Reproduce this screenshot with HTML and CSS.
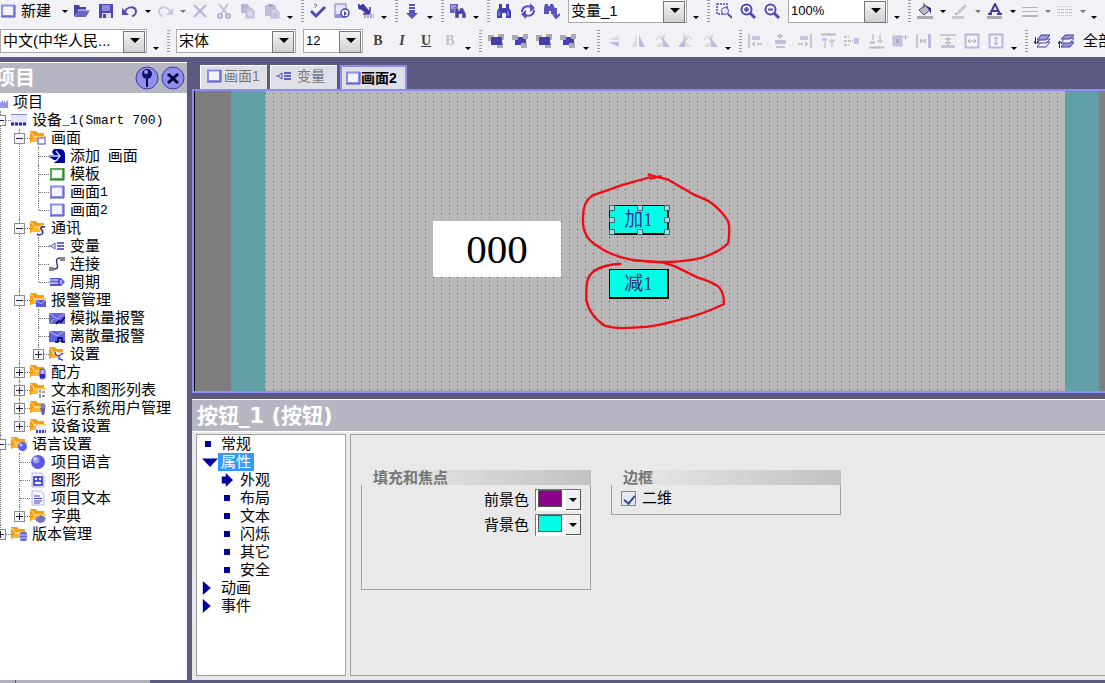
FILE: index.html
```html
<!DOCTYPE html>
<html lang="zh-CN">
<head>
    <meta charset="UTF-8">
    <meta name="viewport" content="width=device-width, initial-scale=1.0">
    <title>画面2 - 设备_1</title>
    <link rel="stylesheet" href="styles.css">
</head>
<body>
    <!-- Icon set -->
    <svg class="sprite" aria-hidden="true">
        <symbol id="screen" viewBox="0 0 16 16"><path d="M2 2.500h12v10.500h-12z" fill="#f4f4ff" stroke="#8c8cec" stroke-width="2"/><path d="M1 14h14V2" fill="none" stroke="#5050b0"/></symbol>
        <symbol id="template" viewBox="0 0 16 16"><path d="M2 3h12v10H2z" fill="#f4fff4" stroke="#58a858" stroke-width="2"/><path d="M1 14h14V2" fill="none" stroke="#206020"/></symbol>
        <symbol id="open" viewBox="0 0 16 16"><path d="M0 14V2h5l1 2h6v3H5z" fill="#4742a8"/><path d="M4 7h12l-4 7H1z" fill="#6a64c4"/><path d="M4 7h12" stroke="#e4e4f4"/></symbol>
        <symbol id="save" viewBox="0 0 16 16"><path d="M1 1h14v14H1z" fill="#4d48b4"/><path d="M4 2h8v6H4z" fill="#8d88d8"/><path d="M4 10h9v5H4z" fill="#dcdcf4"/><path d="M5 11h3v4H5z" fill="#4d48b4"/></symbol>
        <symbol id="undo" viewBox="0 0 16 16"><path d="M3 9c2-6 10-6 11-1 0 3-2 5-4 5" fill="none" stroke="#514bad" stroke-width="2"/><path d="M0 5v7h7z" fill="#514bad"/></symbol>
        <symbol id="redo" viewBox="0 0 16 16"><path d="M13 9C11 3 3 3 2 8c0 3 2 5 4 5" fill="none" stroke="#cac8dc" stroke-width="2"/><path d="M16 5v7H9z" fill="#cac8dc"/></symbol>
        <symbol id="delete" viewBox="0 0 16 16"><path d="M2 2l12 12M14 2L2 14" stroke="#b4b2d6" stroke-width="2"/></symbol>
        <symbol id="cut" viewBox="0 0 16 16"><path d="M3 1l8 10M12 1L5 11" stroke="#c2c0d8" stroke-width="2"/><g fill="none" stroke="#b4b2d2" stroke-width="2"><circle cx="4" cy="13" r="2"/><circle cx="12" cy="13" r="2"/></g></symbol>
        <symbol id="copy" viewBox="0 0 16 16"><path d="M1 1h6l2 2v7H1z" fill="#b9b7d4"/><path d="M6 5h5l3 3v7H6z" fill="#c9c7e2" stroke="#b9b7d2"/><path d="M8 10h4M8 12h4" stroke="#eee"/></symbol>
        <symbol id="paste" viewBox="0 0 16 16"><path d="M1 2h11v11H1z" fill="#c0bed8"/><path d="M4 1h5v3H4z" fill="#a9a7c4"/><path d="M7 6h5l3 3v6H7z" fill="#d4d2ea" stroke="#b4b2d0"/><path d="M9 11h4M9 13h4" stroke="#a9a7d4"/></symbol>
        <symbol id="check" viewBox="0 0 16 16"><path d="M1 8l5 5 9-9" fill="none" stroke="#5049ae" stroke-width="3"/><path d="M4 2q2-2 3 0 0 1-2 2v1" fill="none" stroke="#777"/></symbol>
        <symbol id="simulate" viewBox="0 0 16 16"><path d="M1 1h11v13H1z" fill="#e4e4fc" stroke="#7d78c8"/><path d="M1 11h9v4H1z" fill="#938fe0"/><circle cx="11" cy="10" r="4" fill="#fff" stroke="#4742a8" stroke-width="1.500"/><path d="M10 8v5l3-2.500z" fill="#4742a8"/></symbol>
        <symbol id="transfer" viewBox="0 0 16 16"><path d="M0 1l3 2 2-2 6 7h1V4v7H5l3-1-5-4H1z" fill="#403a9c" stroke="#403a9c"/><path d="M6 12h10M6 14h10" stroke="#5a55ba" stroke-dasharray="2 1"/></symbol>
        <symbol id="download" viewBox="0 0 16 16"><path d="M5 1h6v2H5zM5 4h6v2H5zM5 7h6v3h3l-6 6-6-6h3z" fill="#5a54b8"/></symbol>
        <symbol id="crossref" viewBox="0 0 16 16"><path d="M0 1h8v9H0z" fill="#6761bd"/><path d="M1 3h5M1 5h3" stroke="#ddd"/><path d="M5 5h3l1 3 1-3h3l3 6v4h-4v-4h-3v4H5z" fill="#4b46a8" stroke="#ddd" stroke-width=".5"/></symbol>
        <symbol id="find" viewBox="0 0 16 16"><path d="M3 1h3v4h4V1h3v4l2 3v7h-5v-5H6v5H1V8l2-3z" fill="#443eae"/><path d="M3 8v5M12 8v5" stroke="#a9a5ee"/></symbol>
        <symbol id="replace" viewBox="0 0 16 16"><path d="M2 9c0-5 5-7 9-5M14 7c0 5-5 7-9 5" fill="none" stroke="#5751b5" stroke-width="2"/><path d="M10 0l5 5-5 4zM6 7l-5 4 5 5z" fill="#5751b5"/></symbol>
        <symbol id="findnext" viewBox="0 0 16 16"><path d="M1 1h3v2h2V1h3l2 5v5H7V8H5v3H0V5z" fill="#5a54b8"/><path d="M12 5v9M9 11l3 4 4-4" fill="none" stroke="#5a54b8" stroke-width="2"/></symbol>
        <symbol id="zoomarea" viewBox="0 0 16 16"><path d="M1 1h10v10H1z" fill="none" stroke="#514bad" stroke-width="1.500" stroke-dasharray="2 1"/><circle cx="9" cy="8" r="3.500" fill="#ececff" stroke="#514bad"/><path d="M12 11l4 4" stroke="#514bad" stroke-width="2"/></symbol>
        <symbol id="zoomin" viewBox="0 0 16 16"><circle cx="6.500" cy="6.500" r="5" fill="#f4f4ff" stroke="#514bad" stroke-width="2"/><path d="M4 6.500h5M6.500 4v5" stroke="#514bad" stroke-width="2"/><path d="M10 10l5 5" stroke="#514bad" stroke-width="3"/></symbol>
        <symbol id="zoomout" viewBox="0 0 16 16"><circle cx="6.500" cy="6.500" r="5" fill="#f4f4ff" stroke="#514bad" stroke-width="2"/><path d="M4 6.500h5" stroke="#514bad" stroke-width="2"/><path d="M10 10l5 5" stroke="#514bad" stroke-width="3"/></symbol>
        <symbol id="fill" viewBox="0 0 16 16"><path d="M7 0v5M2 7l6-5 5 5-6 5z" fill="#b9b9c8" stroke="#484860"/><path d="M8 2l6 3v6l-2-4z" fill="#302a78"/><path d="M0 13h16v3H0z" fill="#aaa"/></symbol>
        <symbol id="pen" viewBox="0 0 16 16"><path d="M5 11l1-3 7-7 2 2-7 7z" fill="#c4c4cc"/><path d="M0 13h12v3H0z" fill="#c9c9c9"/><path d="M3 10h2v2H3z" fill="#aaa"/></symbol>
        <symbol id="fontcolor" viewBox="0 0 16 16"><path d="M3 11L8 1l5 10M5 8h6M1 11h4M10 11h5" fill="none" stroke="#443e98" stroke-width="2"/><path d="M0 13h15v3H0z" fill="#aaa"/></symbol>
        <symbol id="lines" viewBox="0 0 16 16"><path d="M0 4.500h16M0 8.500h16" stroke="#b4b4b9"/><path d="M0 13h16" stroke="#b4b4b9" stroke-width="2"/></symbol>
        <symbol id="dashes" viewBox="0 0 16 16"><path d="M0 3.500h16M0 12.500h16" stroke="#bbb" stroke-dasharray="1 1"/><path d="M0 6.500h16M0 9.500h16" stroke="#bbb" stroke-dasharray="3 1"/></symbol>
        <symbol id="front" viewBox="0 0 16 16"><path d="M0 2h6v6H0zM10 1h6v6h-6zM9 9h6v6H9z" fill="#aaa"/><path d="M3 4h11v8H3z" fill="#443eb0"/></symbol>
        <symbol id="back" viewBox="0 0 16 16"><path d="M3 4h11v8H3z" fill="#443eb0"/><path d="M0 2h6v5H0zM9 10h6v5H9zM11 1h5v5h-5z" fill="#aaa"/></symbol>
        <symbol id="flipv" viewBox="0 0 16 16"><path d="M3 7l10-5v5z" fill="#ddd"/><path d="M3 9h10v5z" fill="#bdbbe0"/></symbol>
        <symbol id="fliph" viewBox="0 0 16 16"><path d="M7 2v12H2z" fill="#ddd"/><path d="M9 2v12h6z" fill="#bdbbe0"/></symbol>
        <symbol id="rotate" viewBox="0 0 16 16"><path d="M8 4l8 10H9z" fill="#bdbbe0"/><path d="M1 14h7V9z" fill="#ddd"/><path d="M2 7q3-6 8-2M10 1v5H6" fill="none" stroke="#c4c4cc"/></symbol>
        <symbol id="alignl" viewBox="0 0 16 16"><path d="M1 1v14" stroke="#bbb" stroke-width="1.500"/><path d="M4 3h8v4H4z" fill="#c6c4e2"/><path d="M4 11h3M9 11h5M6 9v4" stroke="#c4c4ce" stroke-width="2"/></symbol>
        <symbol id="alignc" viewBox="0 0 16 16"><path d="M3 7h11v4H3z" fill="#c2c0e0"/><path d="M8 1v5M5 3h6M4 14h9" stroke="#c4c4c8" stroke-width="2"/></symbol>
        <symbol id="alignt" viewBox="0 0 16 16"><path d="M1 1.500h15" stroke="#bbb" stroke-width="2"/><path d="M2 5h5v3H2z" fill="#c6c4e2"/><path d="M5 9v6M12 6v8M9 8h6" stroke="#c4c4ce" stroke-width="1.500"/></symbol>
        <symbol id="alignm" viewBox="0 0 16 16"><path d="M0 4h5M0 8h9M0 12h5" stroke="#c4c4c8" stroke-dasharray="3 1" stroke-width="2"/><path d="M10 5h5v6h-5z" fill="#c2c0e0"/></symbol>
        <symbol id="same" viewBox="0 0 16 16"><path d="M1 3h9v10H1z" fill="#c6c4e2" stroke="#bbb9dc"/><path d="M4 6h3v4H4z" fill="#aaa8c8"/><path d="M11 4h5M13.500 2v5" stroke="#bbb"/></symbol>
        <symbol id="spaceh" viewBox="0 0 16 16"><path d="M1 1v14M4 8h6M5 6v4M9 6v4" stroke="#bbb" stroke-width="1.500"/><path d="M12 1h3v14h-3z" fill="#bcbae0"/></symbol>
        <symbol id="spacev" viewBox="0 0 16 16"><path d="M0 2h16M8 4v8M5 6h6M5 10h6" stroke="#bbb" stroke-width="1.500"/><path d="M1 12h14v3H1z" fill="#c6c4e2"/></symbol>
        <symbol id="sizew" viewBox="0 0 16 16"><path d="M1.500 1.500h13v13h-13z" fill="#f4f4ff" stroke="#bab8dc" stroke-width="2"/><path d="M4 8h8M6 6L4 8l2 2M10 6l2 2-2 2" fill="none" stroke="#aaa"/></symbol>
        <symbol id="sizeh" viewBox="0 0 16 16"><path d="M1.500 1.500h13v13h-13z" fill="#f4f4ff" stroke="#bab8dc" stroke-width="2"/><path d="M8 4v8M6 6l2-2 2 2M6 10l2 2 2-2" fill="none" stroke="#aaa"/></symbol>
        <symbol id="layer-down" viewBox="0 0 16 16"><path d="M7 9h9l-4 5H3z" fill="#f4f4ff" stroke="#453f96"/><path d="M7 6h9l-4 4H3z" fill="#f4f4ff" stroke="#453f96"/><path d="M7 2h9l-4 5H3z" fill="#9a96e4" stroke="#453f96"/><path d="M1.500 4v6M0 8l1.500 3L4 8" fill="none" stroke="#333"/></symbol>
        <symbol id="layer-up" viewBox="0 0 16 16"><path d="M7 9h9l-4 5H3z" fill="#9a96e4" stroke="#453f96"/><path d="M7 5h9l-4 5H3z" fill="#f4f4ff" stroke="#453f96"/><path d="M7 2h9l-4 4H3z" fill="#9a96e4" stroke="#453f96"/><path d="M1.500 15V9M0 11l1.500-3L4 11" fill="none" stroke="#333"/></symbol>

        <symbol id="folder" viewBox="0 0 16 16"><path d="M0 1h6l2 2h6v4H5l-4 6H0z" fill="#f2a010"/><path d="M5 6h11l-4 6H1z" fill="#fcb830"/><path d="M0 2l3 2 1 3h10" fill="none" stroke="#fff0c4" stroke-width=".8"/></symbol>
        <symbol id="f-screen" viewBox="0 0 16 16"><use href="#folder"/><path d="M8 8h7v6H8z" fill="#fff" stroke="#8080e8" stroke-width="1.500"/></symbol>
        <symbol id="f-comm" viewBox="0 0 16 16"><use href="#folder"/><path d="M15 7q-5-1-4 2 3 3 1 5-3 2-5 0" fill="none" stroke="#fff" stroke-width="3"/><path d="M15 7q-5-1-4 2 3 3 1 5-3 2-5 0" fill="none" stroke="#28287c" stroke-width="1.500"/></symbol>
        <symbol id="f-mail" viewBox="0 0 16 16"><use href="#folder"/><path d="M6 8h10v7H6z" fill="#5858dc"/><path d="M6 8l5 4 5-4" fill="none" stroke="#b9b9ff"/></symbol>
        <symbol id="f-set" viewBox="0 0 16 16"><use href="#folder"/><path d="M6 6l4 4 5-3M10 10v3l4 2" fill="none" stroke="#fff" stroke-width="3"/><path d="M6 6l1 3 3 1 4-3M10 10v3l4 1" fill="none" stroke="#4545c8" stroke-width="1.500"/></symbol>
        <symbol id="f-recipe" viewBox="0 0 16 16"><use href="#folder"/><rect x="10" y="5" width="5" height="10" rx="2" fill="#b9b9f4" stroke="#4444a8"/><path d="M10 10h5v4h-5z" fill="#2828d8"/></symbol>
        <symbol id="f-list" viewBox="0 0 16 16"><use href="#folder"/><path d="M8 8h8v8H8z" fill="#fff"/><path d="M10 8v3M9 13h2M9 15h2M12 10h3M12 14h3" stroke="#333"/></symbol>
        <symbol id="f-user" viewBox="0 0 16 16"><use href="#folder"/><circle cx="13" cy="6" r="2.500" fill="#8080d0"/><path d="M10 8h5v4l-1 3h-2z" fill="#6868b8"/></symbol>
        <symbol id="f-device" viewBox="0 0 16 16"><use href="#folder"/><path d="M6 7h10v8H6z" fill="#ececff"/><path d="M6 13.500h10" stroke="#3838c8" stroke-width="3" stroke-dasharray="2 1"/></symbol>
        <symbol id="f-ball" viewBox="0 0 16 16"><use href="#folder"/><circle cx="11.500" cy="10.500" r="4.500" fill="#6060e0"/><circle cx="10" cy="9" r="1.500" fill="#c9c9ff"/></symbol>
        <symbol id="f-book" viewBox="0 0 16 16"><use href="#folder"/><path d="M6 10l5-3 5 3-2 4-4 1-4-2z" fill="#7272c4"/></symbol>
        <symbol id="f-db" viewBox="0 0 16 16"><use href="#folder"/><rect x="9" y="6" width="7" height="9" rx="2" fill="#6464d8"/><path d="M9 9h7M9 12h7" stroke="#ccf"/></symbol>
        <symbol id="project" viewBox="0 0 16 16"><path d="M8 14V9l3-3v3l2-3v3l3-3v8z" fill="#9494ea"/></symbol>
        <symbol id="device" viewBox="0 0 16 16"><path d="M0 2h16v12H0z" fill="#e4e4ff"/><path d="M0 2.500h16" stroke="#8888d8"/><path d="M0 12h16" stroke="#2424c4" stroke-width="3" stroke-dasharray="3 1"/></symbol>
        <symbol id="add" viewBox="0 0 16 16"><path d="M5 1h7q4 1 4 6v8H5l3-3H5L0 9V7h5L3 4z" fill="#0000a0"/><path d="M0 8h11M7 3l4 5-4 5" fill="none" stroke="#b9d4ff" stroke-width="1.500"/></symbol>
        <symbol id="tag" viewBox="0 0 16 16"><path d="M0 8h2l4-3v6L2 8" fill="none" stroke="#4848d0"/><path d="M8 5h7M8 8h7M8 11h7" stroke="#3434c8" stroke-width="1.500"/></symbol>
        <symbol id="link" viewBox="0 0 16 16"><path d="M0 11h5v4H0zM11 1h5v4h-5z" fill="#888"/><path d="M5 13q5 0 3-5-2-6 3-6" fill="none" stroke="#343490" stroke-width="1.500"/></symbol>
        <symbol id="cycle" viewBox="0 0 16 16"><path d="M1 4h11l4 4-4 4H1z" fill="#5252e4"/><path d="M0 6h9M0 9h9M12 6v4" stroke="#c9c9ff" stroke-width="1.500"/></symbol>
        <symbol id="analog" viewBox="0 0 16 16"><path d="M0 3h16v11H0z" fill="#6262e4"/><path d="M0 3l8 6 8-6M0 14l5-5" fill="none" stroke="#b9b9ff"/><path d="M7 14l3-3 2 1 4-5" fill="none" stroke="#00004c" stroke-width="1.500"/></symbol>
        <symbol id="discrete" viewBox="0 0 16 16"><path d="M0 3h16v11H0z" fill="#6262e4"/><path d="M0 3l8 5 8-5" fill="none" stroke="#b9b9ff"/><path d="M6 14h3v-4h4v4h3" fill="none" stroke="#00004c" stroke-width="1.500"/></symbol>
        <symbol id="ball" viewBox="0 0 16 16"><circle cx="8" cy="8" r="7" fill="#5858e4"/><circle cx="6" cy="6" r="3.500" fill="#9a9af8"/><circle cx="5" cy="5" r="1.500" fill="#e4e4ff"/></symbol>
        <symbol id="graphic" viewBox="0 0 16 16"><path d="M2 1h9l3 3v11H2z" fill="#f0f0ff" stroke="#b4b4e0"/><path d="M4 5h8v8H4zM8 5v4h4M4 9h3" fill="none" stroke="#2828c8" stroke-width="1.500"/></symbol>
        <symbol id="text" viewBox="0 0 16 16"><path d="M2 1h9l3 3v11H2z" fill="#f4f4ff" stroke="#b4b4e0"/><path d="M4 6h6M4 8.500h8M4 11h8M4 13h6" stroke="#4040c8"/></symbol>
    </svg>

    <!-- Toolbars -->
    <div class="toolbars">
        <div class="toolbar toolbar-top">
            <button class="new"><svg class="icon"><use href="#screen"/></svg>新建</button><i class="caret"></i>
            <button class="tool" aria-label="打开"><svg class="icon"><use href="#open"/></svg></button>
            <button class="tool" aria-label="保存"><svg class="icon"><use href="#save"/></svg></button>
            <button class="tool" aria-label="撤消"><svg class="icon"><use href="#undo"/></svg></button><i class="caret"></i>
            <button class="tool" aria-label="重做"><svg class="icon"><use href="#redo"/></svg></button><i class="caret dim"></i>
            <button class="tool" aria-label="删除"><svg class="icon"><use href="#delete"/></svg></button>
            <button class="tool" aria-label="剪切"><svg class="icon"><use href="#cut"/></svg></button>
            <button class="tool" aria-label="复制"><svg class="icon"><use href="#copy"/></svg></button>
            <button class="tool" aria-label="粘贴"><svg class="icon"><use href="#paste"/></svg></button>
            <i class="caret more"></i><i class="grip"></i>
            <button class="tool" aria-label="检查"><svg class="icon"><use href="#check"/></svg></button>
            <button class="tool" aria-label="模拟"><svg class="icon"><use href="#simulate"/></svg></button>
            <button class="tool" aria-label="传送"><svg class="icon"><use href="#transfer"/></svg></button>
            <i class="caret more"></i><i class="grip"></i>
            <button class="tool" aria-label="下载"><svg class="icon"><use href="#download"/></svg></button>
            <i class="caret more"></i><i class="grip"></i>
            <button class="tool" aria-label="交叉引用"><svg class="icon"><use href="#crossref"/></svg></button>
            <i class="caret more"></i><i class="grip"></i>
            <button class="tool" aria-label="查找"><svg class="icon"><use href="#find"/></svg></button>
            <button class="tool" aria-label="替换"><svg class="icon"><use href="#replace"/></svg></button>
            <button class="tool" aria-label="查找下一个"><svg class="icon"><use href="#findnext"/></svg></button>
            <label class="combo combo-tag"><select aria-label="变量"><option>变量_1</option></select></label>
            <i class="caret more"></i><i class="grip"></i>
            <button class="tool" aria-label="缩放区域"><svg class="icon"><use href="#zoomarea"/></svg></button>
            <button class="tool" aria-label="放大"><svg class="icon"><use href="#zoomin"/></svg></button>
            <button class="tool" aria-label="缩小"><svg class="icon"><use href="#zoomout"/></svg></button>
            <label class="combo combo-zoom"><select aria-label="缩放"><option>100%</option></select></label>
            <i class="caret more"></i><i class="grip"></i>
            <button class="tool" aria-label="填充"><svg class="icon"><use href="#fill"/></svg></button><i class="caret"></i>
            <button class="tool" aria-label="线条颜色"><svg class="icon"><use href="#pen"/></svg></button><i class="caret dim"></i>
            <button class="tool" aria-label="字体颜色"><svg class="icon"><use href="#fontcolor"/></svg></button><i class="caret"></i>
            <button class="tool" aria-label="线宽"><svg class="icon"><use href="#lines"/></svg></button><i class="caret dim"></i>
            <button class="tool" aria-label="线型"><svg class="icon"><use href="#dashes"/></svg></button><i class="caret dim"></i>
            <i class="caret more"></i><i class="grip"></i>
        </div>
        <div class="toolbar toolbar-bottom">
            <label class="combo combo-lang"><select aria-label="语言"><option>中文(中华人民...</option></select></label>
            <i class="caret more"></i><i class="grip"></i>
            <label class="combo combo-font"><select aria-label="字体"><option>宋体</option></select></label>
            <label class="combo combo-size"><select aria-label="字号"><option>12</option></select></label>
            <button class="tool letter"><b>B</b></button>
            <button class="tool letter"><em>I</em></button>
            <button class="tool letter"><u>U</u></button>
            <button class="tool letter off"><b>B</b></button>
            <i class="caret more"></i><i class="grip"></i>
            <button class="tool" aria-label="置前"><svg class="icon"><use href="#front"/></svg></button>
            <button class="tool" aria-label="置后"><svg class="icon"><use href="#back"/></svg></button>
            <button class="tool" aria-label="上移"><svg class="icon"><use href="#front"/></svg></button>
            <button class="tool" aria-label="下移"><svg class="icon"><use href="#back"/></svg></button>
            <i class="caret more"></i><i class="grip"></i>
            <button class="tool" aria-label="垂直翻转"><svg class="icon"><use href="#flipv"/></svg></button>
            <button class="tool" aria-label="水平翻转"><svg class="icon"><use href="#fliph"/></svg></button>
            <button class="tool" aria-label="向右旋转"><svg class="icon"><use href="#rotate"/></svg></button>
            <button class="tool" aria-label="向左旋转"><svg class="icon mirror"><use href="#rotate"/></svg></button>
            <button class="tool" aria-label="旋转"><svg class="icon"><use href="#rotate"/></svg></button>
            <i class="caret more"></i><i class="grip"></i>
            <button class="tool" aria-label="左对齐"><svg class="icon"><use href="#alignl"/></svg></button>
            <button class="tool" aria-label="居中"><svg class="icon"><use href="#alignc"/></svg></button>
            <button class="tool" aria-label="右对齐"><svg class="icon mirror"><use href="#alignl"/></svg></button>
            <button class="tool" aria-label="顶端对齐"><svg class="icon"><use href="#alignt"/></svg></button>
            <button class="tool" aria-label="垂直居中"><svg class="icon"><use href="#alignm"/></svg></button>
            <button class="tool" aria-label="底端对齐"><svg class="icon flip"><use href="#alignt"/></svg></button>
            <button class="tool" aria-label="相同尺寸"><svg class="icon"><use href="#same"/></svg></button>
            <button class="tool" aria-label="水平间距"><svg class="icon"><use href="#spaceh"/></svg></button>
            <button class="tool" aria-label="垂直间距"><svg class="icon"><use href="#spacev"/></svg></button>
            <button class="tool" aria-label="相同宽度"><svg class="icon"><use href="#sizew"/></svg></button>
            <button class="tool" aria-label="相同高度"><svg class="icon"><use href="#sizeh"/></svg></button>
            <i class="caret more"></i><i class="grip"></i>
            <button class="tool" aria-label="下一层"><svg class="icon"><use href="#layer-down"/></svg></button>
            <button class="tool" aria-label="上一层"><svg class="icon"><use href="#layer-up"/></svg></button>
            <span class="layers">全部</span>
        </div>
    </div>

    <div class="workspace">
        <!-- Project tree -->
        <aside class="project">
            <header class="panel-title">
                <h2>项目</h2>
                <button class="round" aria-label="固定"><svg viewBox="0 0 24 24"><circle cx="12" cy="12" r="11" fill="#9090ec" stroke="#3c3c9c"/><path d="M12 12v9" stroke="#000050" stroke-width="2"/><circle cx="12" cy="8" r="5" fill="#14146c"/><circle cx="11" cy="6" r="2" fill="#9c9ce8"/></svg></button>
                <button class="round" aria-label="关闭"><svg viewBox="0 0 24 24"><circle cx="12" cy="12" r="11" fill="#9090ec" stroke="#3c3c9c"/><path d="M7 8l10 9M17 8L7 17" stroke="#000040" stroke-width="3"/></svg></button>
            </header>
            <ul class="tree">
                <li><div class="node"><svg class="icon"><use href="#project"/></svg>项目</div>
                    <ul>
                        <li><div class="node"><i class="toggle open"></i><svg class="icon"><use href="#device"/></svg>设备<span class="mono">_1(Smart 700)</span></div>
                            <ul>
                                <li><div class="node"><i class="toggle open"></i><svg class="icon"><use href="#f-screen"/></svg>画面</div>
                                    <ul>
                                        <li><div class="node"><svg class="icon"><use href="#add"/></svg>添加<span class="mono">&nbsp;</span>画面</div></li>
                                        <li><div class="node"><svg class="icon"><use href="#template"/></svg>模板</div></li>
                                        <li><div class="node"><svg class="icon"><use href="#screen"/></svg>画面<span class="mono">1</span></div></li>
                                        <li><div class="node"><svg class="icon"><use href="#screen"/></svg>画面<span class="mono">2</span></div></li>
                                    </ul>
                                </li>
                                <li><div class="node"><i class="toggle open"></i><svg class="icon"><use href="#f-comm"/></svg>通讯</div>
                                    <ul>
                                        <li><div class="node"><svg class="icon"><use href="#tag"/></svg>变量</div></li>
                                        <li><div class="node"><svg class="icon"><use href="#link"/></svg>连接</div></li>
                                        <li><div class="node"><svg class="icon"><use href="#cycle"/></svg>周期</div></li>
                                    </ul>
                                </li>
                                <li><div class="node"><i class="toggle open"></i><svg class="icon"><use href="#f-mail"/></svg>报警管理</div>
                                    <ul>
                                        <li><div class="node"><svg class="icon"><use href="#analog"/></svg>模拟量报警</div></li>
                                        <li><div class="node"><svg class="icon"><use href="#discrete"/></svg>离散量报警</div></li>
                                        <li><div class="node"><i class="toggle"></i><svg class="icon"><use href="#f-set"/></svg>设置</div></li>
                                    </ul>
                                </li>
                                <li><div class="node"><i class="toggle"></i><svg class="icon"><use href="#f-recipe"/></svg>配方</div></li>
                                <li><div class="node"><i class="toggle"></i><svg class="icon"><use href="#f-list"/></svg>文本和图形列表</div></li>
                                <li><div class="node"><i class="toggle"></i><svg class="icon"><use href="#f-user"/></svg>运行系统用户管理</div></li>
                                <li><div class="node"><i class="toggle"></i><svg class="icon"><use href="#f-device"/></svg>设备设置</div></li>
                            </ul>
                        </li>
                        <li><div class="node"><i class="toggle open"></i><svg class="icon"><use href="#f-ball"/></svg>语言设置</div>
                            <ul>
                                <li><div class="node"><svg class="icon"><use href="#ball"/></svg>项目语言</div></li>
                                <li><div class="node"><svg class="icon"><use href="#graphic"/></svg>图形</div></li>
                                <li><div class="node"><svg class="icon"><use href="#text"/></svg>项目文本</div></li>
                                <li><div class="node"><i class="toggle"></i><svg class="icon"><use href="#f-book"/></svg>字典</div></li>
                            </ul>
                        </li>
                        <li><div class="node"><i class="toggle"></i><svg class="icon"><use href="#f-db"/></svg>版本管理</div></li>
                    </ul>
                </li>
            </ul>
        </aside>

        <main class="main">
            <!-- Editor tabs -->
            <nav class="tabs">
                <button class="tab"><svg class="icon"><use href="#screen"/></svg>画面1</button>
                <button class="tab"><svg class="icon"><use href="#tag"/></svg>变量</button>
                <button class="tab active"><svg class="icon"><use href="#screen"/></svg>画面2</button>
            </nav>

            <!-- Screen editor -->
            <section class="editor">
                <div class="bezel"></div>
                <div class="canvas">
                    <input class="io-field" value="000" aria-label="IO 域" readonly>
                    <button class="hmi-button add-one">加1</button>
                    <button class="hmi-button sub-one">减1</button>
                    <svg class="handles" viewBox="0 0 62 32">
                        <path d="M.5 1.500h5v5h-5zM28.500 1.500h5v5h-5zM55.500 1.500h5v5h-5zM.5 13.500h5v5h-5zM55.500 13.500h5v5h-5zM.5 25.500h5v5h-5zM28.500 25.500h5v5h-5zM55.500 25.500h5v5h-5z" fill="#a8dce0" stroke="#2c6c74"/>
                    </svg>
                    <svg class="marks" viewBox="0 0 990 510">
                        <path d="M690 36C660 46 630 53 610 59L516 92Q488 112 489 160Q486 214 528 240Q570 272 630 283Q690 292 740 291Q800 290 850 277Q905 257 925 234Q932 180 922 165Q900 130 862 106L820 88L742 43L716 37L686 29M692 41L722 34"/>
                        <path d="M601 297C560 298 540 306 522 318C500 335 498 355 499 405C504 430 520 460 555 482Q580 492 640 488C700 486 740 475 780 464Q850 448 912 417C912 385 905 370 889 360Q860 345 832 337L765 304L728 292L640 286"/>
                    </svg>
                </div>
                <div class="bezel bezel-right"></div>
            </section>

            <!-- Property view -->
            <section class="properties">
                <header class="panel-title"><h2>按钮_1 (按钮)</h2></header>
                <div class="property-body">
                    <ul class="categories">
                        <li class="dot">常规</li>
                        <li class="down"><a href="#" class="selected">属性</a></li>
                        <li class="sub arrow">外观</li>
                        <li class="sub dot">布局</li>
                        <li class="sub dot">文本</li>
                        <li class="sub dot">闪烁</li>
                        <li class="sub dot">其它</li>
                        <li class="sub dot">安全</li>
                        <li class="right">动画</li>
                        <li class="right">事件</li>
                    </ul>
                    <div class="page">
                        <section class="group group-fill">
                            <h3>填充和焦点</h3>
                            <div class="group-box">
                                <div class="color-row"><label for="fore">前景色</label><button class="color" id="fore"><i class="swatch purple"></i><i class="drop"></i></button></div>
                                <div class="color-row"><label for="back-color">背景色</label><button class="color" id="back-color"><i class="swatch cyan"></i><i class="drop"></i></button></div>
                            </div>
                        </section>
                        <section class="group">
                            <h3>边框</h3>
                            <div class="group-box">
                                <label class="check"><input type="checkbox" checked>二维</label>
                            </div>
                        </section>
                    </div>
                </div>
            </section>
        </main>
    </div>
    <footer class="status"><i></i><i></i></footer>
</body>
</html>
```
FILE: styles.css
```css
/* GLOBAL STYLES */
* {
    box-sizing: border-box;
}

body {
    margin: 0;
    height: 100vh;
    display: flex;
    flex-direction: column;
    overflow: hidden;
    background-color: #5c5a80;
    font-family: "Liberation Sans", "Noto Sans CJK SC", sans-serif;
    font-size: 15px;
    line-height: 18px;
    color: #000;
}

button, select, input {
    font: inherit;
    color: inherit;
    margin: 0;
    padding: 0;
    border: 0;
    background: none;
}

ul {
    list-style: none;
    margin: 0;
    padding: 0;
}

h2, h3 {
    margin: 0;
}

.sprite {
    display: none;
}

.icon {
    width: 16px;
    height: 16px;
    flex: none;
}

.mirror {
    transform: scaleX(-1);
}

.flip {
    transform: scaleY(-1);
}

/* TOOLBARS */
.toolbars {
    flex: none;
    background-color: #f1f1f6;
    overflow: hidden;
    padding-bottom: 1px;
}

.toolbar {
    display: flex;
    align-items: center;
    white-space: nowrap;
}

.toolbar > * {
    flex: none;
}

.toolbar-top {
    height: 22px;
    margin-bottom: 4px;
}

.toolbar-bottom {
    height: 30px;
}

.new {
    width: 59px;
    display: flex;
    align-items: center;
    gap: 5px;
}

.tool {
    width: 24px;
    height: 22px;
    display: flex;
    align-items: center;
    justify-content: center;
}

.letter {
    font-family: "Liberation Serif", serif;
    font-size: 14px;
    font-weight: bold;
    color: #444;
}

.off {
    color: #c4c4c8;
}

.caret {
    width: 11px;
    display: flex;
    justify-content: center;
}

.caret::before {
    content: "";
    border: 3px solid transparent;
    border-top-color: #000;
    border-bottom: 0;
}

.dim::before {
    border-top-color: #777;
}

.more {
    align-self: flex-end;
    padding-bottom: 3px;
}

.toolbar-bottom .more {
    padding-bottom: 6px;
}

.grip {
    width: 11px;
    height: 22px;
    background: repeating-linear-gradient(#999 0 1px, transparent 1px 3px) 6px 0 / 3px 100% no-repeat;
}

.combo {
    position: relative;
    height: 24px;
    margin: 0 3px 0 4px;
    background-color: #fff;
    border: 1px solid #aaa;
}

.combo select {
    appearance: none;
    width: 100%;
    height: 22px;
    padding-left: 2px;
    line-height: 22px;
}

.combo::before, .combo::after {
    content: "";
    position: absolute;
    pointer-events: none;
}

.combo::before {
    top: 1px;
    right: 1px;
    width: 20px;
    height: 20px;
    border: 1px solid #777;
    background: linear-gradient(#f4f4f4, #cfcfcf);
}

.combo::after {
    top: 8px;
    right: 6px;
    border: 5px solid transparent;
    border-top-color: #000;
    border-bottom: 0;
}

.combo-tag {
    width: 119px;
}

.combo-zoom {
    width: 100px;
    font-size: 13px;
}

.combo-lang {
    width: 147px;
    margin-left: 0;
}

.combo-font {
    width: 120px;
}

.combo-size {
    width: 60px;
    font-size: 13px;
}

.layers {
    padding-left: 5px;
}

/* WORKSPACE */
.workspace {
    flex: 1;
    min-height: 0;
    display: flex;
    gap: 5px;
}

.panel-title {
    height: 32px;
    display: flex;
    align-items: center;
    gap: 2px;
    border-top: 1px solid #fff;
    background-color: #b6b6c2;
}

.panel-title h2 {
    flex: 1;
    color: #fff;
    font-family: "DejaVu Sans", "Noto Sans CJK SC", sans-serif;
    font-size: 21px;
    line-height: 30px;
}

/* PROJECT TREE */
.project {
    width: 187px;
    flex: none;
    margin-top: 5px;
    display: flex;
    flex-direction: column;
    background-color: #fff;
    overflow: hidden;
}

.project .panel-title {
    flex: none;
    height: 31px;
    padding-right: 2px;
}

.project h2 {
    margin-left: -5px;
    font-size: 20px;
}

.round {
    width: 24px;
    height: 24px;
}

.round svg {
    display: block;
}

.tree {
    margin-left: -24px;
    white-space: nowrap;
}

.tree ul {
    padding-left: 19px;
}

.tree li {
    position: relative;
}

/* dotted branch lines */
.tree li li::before {
    content: "";
    position: absolute;
    left: 5px;
    top: 0;
    bottom: 0;
    border-left: 1px dotted #777;
}

.tree li li:last-child::before {
    bottom: auto;
    height: 9px;
}

.tree li li > .node::before {
    content: "";
    position: absolute;
    left: 6px;
    top: 9px;
    width: 10px;
    border-top: 1px dotted #777;
}

.node {
    height: 18px;
    display: flex;
    align-items: center;
    padding-left: 16px;
}

.node .icon {
    margin-right: 5px;
}

.toggle {
    position: relative;
    width: 11px;
    height: 11px;
    margin-left: -16px;
    margin-right: 5px;
    border: 1px solid #889;
    background:
        linear-gradient(#224, #224) center / 7px 1px no-repeat,
        linear-gradient(#224, #224) center / 1px 7px no-repeat,
        #f6f6f6;
}

.toggle.open {
    background: linear-gradient(#224, #224) center / 7px 1px no-repeat, #f6f6f6;
}

.mono {
    padding-top: 2px;
    font-family: "Liberation Mono", monospace;
    font-size: 13px;
}

/* TABS */
.main {
    flex: 1;
    min-width: 0;
    display: flex;
    flex-direction: column;
}

.tabs {
    display: flex;
    gap: 3px;
    padding: 8px 0 0 8px;
}

.tab {
    width: 67px;
    height: 24px;
    display: flex;
    align-items: center;
    gap: 2px;
    padding: 0 0 3px 5px;
    border-top: 1px solid #fff;
    border-left: 1px solid #fff;
    background-color: #dfdfe8;
    color: #777;
    font-size: 14px;
    white-space: nowrap;
}

.tab:nth-child(2) {
    gap: 5px;
}

.tab.active {
    gap: 0;
    padding: 0 0 0 3px;
    border: 2px solid #8e8ef0;
    border-bottom: 0;
    color: #000;
    font-weight: bold;
}

/* EDITOR */
.editor {
    height: 304px;
    flex: none;
    display: flex;
    border: 2px solid #8e8ef0;
    border-right: 0;
}

.bezel {
    width: 71px;
    border-left: 1px solid #000;
    background: linear-gradient(90deg, #7e7e7e 36px, #5f9fa5 36px);
}

.bezel-right {
    width: 40px;
    border-left: 0;
    background: linear-gradient(90deg, #5f9fa5 34px, #7e7e7e 34px);
}

/* 8px alignment grid */
.canvas {
    position: relative;
    flex: 1;
    overflow: hidden;
    background:
        conic-gradient(from 270deg at 1px 1px, #444 90deg, transparent 0) 0 2px / 8px 8px,
        conic-gradient(from 270deg at 1px 1px, #8c8c8c 90deg, transparent 0) 0 6px / 8px 8px,
        #b8b8b8;
}

.io-field {
    position: absolute;
    left: 168px;
    top: 130px;
    width: 128px;
    height: 56px;
    background-color: #fff;
    font-family: "Liberation Serif", serif;
    font-size: 41px;
    text-align: center;
}

.hmi-button {
    position: absolute;
    left: 344px;
    width: 60px;
    height: 30px;
    border: 1px solid #000;
    border-right-width: 2px;
    border-bottom-width: 2px;
    background-color: #00ffe6;
    color: #3c3070;
    font-family: "Liberation Serif", "Noto Sans CJK SC", serif;
    font-size: 19px;
    line-height: 26px;
}

.add-one {
    top: 114px;
    color: #4630a0;
}

.sub-one {
    top: 178px;
}

.handles {
    position: absolute;
    left: 344px;
    top: 113px;
    width: 62px;
    height: 32px;
    pointer-events: none;
}

.marks {
    position: absolute;
    left: 155px;
    top: 74px;
    width: 330px;
    height: 170px;
    fill: none;
    stroke: #f00c14;
    stroke-width: 7;
    stroke-linejoin: round;
    stroke-linecap: round;
    pointer-events: none;
}

/* PROPERTIES */
.properties {
    flex: 1;
    min-height: 0;
    margin-top: 6px;
    display: flex;
    flex-direction: column;
    background-color: #e9e9e9;
}

.properties .panel-title {
    flex: none;
    padding-left: 5px;
}

.property-body {
    flex: 1;
    min-height: 0;
    display: flex;
    gap: 4px;
    padding: 2px 0 4px 4px;
    border-top: 1px solid #fff;
}

.categories {
    width: 150px;
    border: 1px solid #a0a0a0;
    background-color: #fff;
}

.categories li {
    height: 18px;
    display: flex;
    align-items: center;
    padding-left: 5px;
}

.categories li::before {
    content: "";
    width: 16px;
    height: 14px;
    margin-right: 3px;
    background-color: #00009c;
    clip-path: polygon(0 25%, 100% 25%, 50% 85%);
}

.categories .sub {
    padding-left: 24px;
}

.categories .dot::before {
    clip-path: inset(4px 7px 4px 3px);
}

.categories .right::before {
    clip-path: polygon(5% 0, 55% 50%, 5% 100%);
}

.categories .arrow::before {
    clip-path: polygon(5% 25%, 30% 25%, 30% 0, 75% 50%, 30% 100%, 30% 75%, 5% 75%);
}

.selected {
    padding: 0 3px;
    margin-left: -3px;
    background-color: #3399ff;
    color: #fff;
    text-decoration: none;
}

.page {
    flex: 1;
    display: flex;
    align-items: flex-start;
    gap: 20px;
    padding: 35px 10px;
    border: 1px solid #a0a0a0;
    border-right: 0;
}

.group {
    width: 230px;
}

.group h3 {
    height: 15px;
    padding-left: 12px;
    background: linear-gradient(100deg, #e9e9e9 5%, #c2c2c2);
    color: #777;
    font-size: 15px;
    line-height: 16px;
}

.group-box {
    min-height: 30px;
    padding: 4px 9px;
    border: 1px solid #a0a0a0;
    border-top: 0;
}

.group-fill .group-box {
    height: 105px;
}

.color-row {
    display: flex;
    align-items: center;
    justify-content: flex-end;
    gap: 6px;
    height: 22px;
    margin-bottom: 3px;
}

.color {
    width: 46px;
    height: 22px;
    display: flex;
    justify-content: space-between;
    padding-left: 2px;
    border-top: 1px solid #777;
    border-left: 1px solid #777;
    background-color: #fff;
}

.swatch {
    width: 24px;
    height: 17px;
    border: 1px solid #555;
}

.purple {
    background-color: #8c008c;
}

.cyan {
    background-color: #00ffe6;
}

.drop {
    width: 15px;
    height: 20px;
    display: flex;
    align-items: center;
    justify-content: center;
    border-right: 1px solid #555;
    border-bottom: 1px solid #555;
    background-color: #f0f0f0;
}

.drop::before {
    content: "";
    border: 4px solid transparent;
    border-top-color: #000;
    border-bottom: 0;
}

.check {
    display: flex;
    align-items: center;
    gap: 6px;
}

.check input {
    appearance: none;
    width: 15px;
    height: 15px;
    border: 1px solid #7c8894;
    background-color: #e4e8f4;
    position: relative;
}

.check input:checked::after {
    content: "";
    position: absolute;
    left: 4px;
    top: 1px;
    width: 5px;
    height: 9px;
    border: solid #34508c;
    border-width: 0 2px 2px 0;
    transform: rotate(40deg);
}

/* STATUS STRIP */
.status {
    flex: none;
    height: 3px;
    display: flex;
    gap: 1px;
}

.status i {
    width: 15px;
    background-color: #b0b0bc;
}

.status i + i {
    width: 134px;
}
```
